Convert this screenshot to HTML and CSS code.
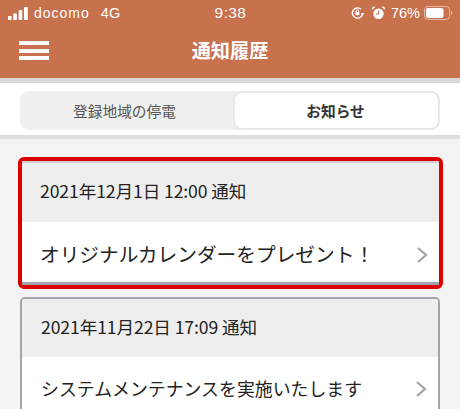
FILE: index.html
```html
<!DOCTYPE html>
<html lang="ja">
<head>
<meta charset="utf-8">
<title>通知履歴</title>
<link rel="stylesheet" href="styles.css">
</head>
<body>
<header class="app-header">
  <div class="status">
    <div class="status-left">
      <svg class="signal" width="21" height="13" viewBox="0 0 21 13"><rect x="0" y="9" width="3.6" height="4" rx=".8"/><rect x="5.3" y="6.5" width="3.6" height="6.5" rx=".8"/><rect x="10.6" y="3" width="3.6" height="10" rx=".8"/><rect x="16" y="0" width="3.8" height="13" rx=".8"/></svg>
      <span class="carrier">docomo</span><span class="net">4G</span>
    </div>
    <div class="time">9:38</div>
    <div class="status-right">
      <svg class="lock" width="14" height="14" viewBox="0 0 14 14"><path d="M11.6 7A5.1 5.1 0 1 1 10 3.3" fill="none" stroke="#fff" stroke-width="1.4"/><path d="M9.8 7.2h3.6L11.6 9.6z" fill="#fff"/><rect x="4.4" y="6" width="4" height="3.2" fill="#fff"/><path d="M5.2 6V5a1.2 1.2 0 0 1 2.4 0v1" fill="none" stroke="#fff"/></svg>
      <svg class="alarm" width="13" height="14" viewBox="0 0 13 14"><circle cx="6.5" cy="7.8" r="5.2" fill="#fff"/><path d="M6.5 4.6v3.4H4" fill="none" stroke="#c8714d" stroke-width="1"/><path d="M.4 3.4 3 1.1 1.5.7.3 1.9zM12.6 3.4 10 1.1 11.5.7 12.7 1.9z" fill="#fff" stroke="#fff" stroke-width=".5"/></svg>
      <span class="pct">76%</span>
      <svg class="battery" width="29" height="14" viewBox="0 0 29 14"><rect x=".5" y=".5" width="25" height="13" rx="3.2" fill="none" stroke="#fff" stroke-opacity=".5"/><rect x="2" y="2" width="17.5" height="10" rx="2" fill="#fff"/><path d="M27 5v4c.9-.3 1.4-1 1.4-2s-.5-1.700-1.400-2z" fill="#fff" fill-opacity=".5"/></svg>
    </div>
  </div>
  <div class="titlebar">
    <div class="menu"><span></span><span></span><span></span></div>
    <h1 class="title">通知履歴</h1>
  </div>
</header>
<nav class="tabs-band">
  <div class="tabs">
    <div class="tab">登録地域の停電</div>
    <div class="tab tab-active">お知らせ</div>
  </div>
</nav>
<main class="list">
  <article class="card card-marked">
    <div class="card-inner">
      <div class="card-head">2021年12月1日 12:00 通知</div>
      <div class="card-body">
        <span class="card-title">オリジナルカレンダーをプレゼント！</span>
        <svg class="chev" width="12" height="18" viewBox="0 0 12 18"><path d="M2 2l8 7-8 7" fill="none" stroke="#a3a3ad" stroke-width="2.200"/></svg>
      </div>
    </div>
  </article>
  <article class="card">
    <div class="card-inner">
      <div class="card-head">2021年11月22日 17:09 通知</div>
      <div class="card-body">
        <span class="card-title card-title-small">システムメンテナンスを実施いたします</span>
        <svg class="chev" width="12" height="18" viewBox="0 0 12 18"><path d="M2 2l8 7-8 7" fill="none" stroke="#a3a3ad" stroke-width="2.200"/></svg>
      </div>
    </div>
  </article>
</main>
</body>
</html>
```
FILE: styles.css
```css
* { box-sizing: border-box; }
html, body { margin: 0; padding: 0; }
body {
  width: 460px;
  height: 409px;
  overflow: hidden;
  background: #f4f4f4;
  font-family: "Noto Sans CJK JP", "Noto Sans", sans-serif;
  color: #222;
}
.app-header { background: #c8714d; height: 78px; color: #fff; }
.status {
  height: 26px;
  display: grid;
  grid-template-columns: 1fr auto 1fr;
  align-items: center;
  padding: 0 7px 0 8px;
  font-family: "Liberation Sans", sans-serif;
  font-size: 14px;
}
.status-left { display: flex; align-items: center; }
.signal { fill: #fff; margin-right: 5px; }
.carrier { letter-spacing: 1px; }
.net { margin-left: 11px; font-size: 14.500px; }
.time { font-size: 15.500px; letter-spacing: .4px; }
.status-right { display: flex; align-items: center; justify-content: flex-end; }
.alarm { margin-left: 7px; }
.pct { margin-left: 6px; margin-right: 4px; font-size: 14.500px; }
.titlebar { position: relative; height: 52px; display: flex; align-items: center; justify-content: center; }
.menu { position: absolute; left: 19px; top: 15px; width: 30px; display: flex; flex-direction: column; gap: 3.5px; }
.menu span { display: block; height: 4px; background: #fff; }
.title { margin: 0; font-size: 19.200px; font-weight: 700; line-height: 24px; position: relative; top: -2px; }
.tabs-band {
  background: #fff;
  height: 61px;
  border-top: 5px solid #d9d9d9;
  border-bottom: 4px solid #dedede;
  padding: 8px 20px 0;
}
.tabs {
  display: grid;
  grid-template-columns: 210px 1fr;
  height: 39px;
  background: #f0f0f0;
  border-radius: 9px;
}
.tab { display: flex; align-items: center; justify-content: center; font-size: 14.700px; color: #555; padding-right: 1px; }
.tab-active {
  background: #fff;
  border: 2px solid #e8e8e8;
  border-radius: 9px;
  font-weight: 700;
  color: #333;
  margin: 0 0 0 3px;
  padding: 0 2px 0 0;
}
.list { padding: 18px 20px 0; display: flex; flex-direction: column; gap: 8px; }
.card { border-radius: 5px; }
.card-inner { border: 2px solid #a3a3ad; border-radius: 5px; overflow: hidden; background: #fff; }
.card-marked { margin: 0 -3px 0 -2px; border: 4px solid #dc0000; border-radius: 6px; height: 132px; }
.card-marked .card-inner { border-radius: 0; border-width: 2px 0 3px; height: 124px; border-top-color: #d0d0d4; }
.card-head { height: 58px; background: #eee; display: flex; align-items: center; padding: 0 0 4px 19px; font-size: 17.600px; letter-spacing: -.1px; color: #222; }
.card-body { height: 61px; display: flex; align-items: center; justify-content: space-between; padding: 0 11px 0 19px; background: #fff; }
.card-marked .card-head { height: 59px; padding-left: 18px; }
.card-marked .card-body { height: 60px; padding-top: 3px; padding-left: 18px; padding-right: 11px; }
.card-title { font-size: 19.700px; color: #222; white-space: nowrap; }
.card-title-small { font-size: 17.900px; }
.chev { flex: none; position: relative; top: 1px; }
```
